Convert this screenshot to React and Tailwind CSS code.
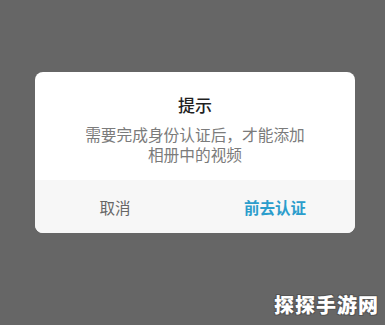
export default function App() {
  const font = { fontFamily: '"Noto Sans CJK SC", "Noto Sans", sans-serif' };
  return (
    <div
      className="relative w-[385px] h-[325px] bg-[#666666] pl-[35px] pt-[72px] overflow-hidden"
      style={font}
    >
      {/* Dialog */}
      <div className="w-[320px] h-[161px] bg-white rounded-[8px] overflow-hidden flex flex-col">
        <div className="flex-1 flex flex-col items-center pt-[21px]">
          <div className="text-[17px] leading-[24px] font-medium text-[#1f1f1f]">提示</div>
          <div className="mt-[8px] flex flex-col items-center text-[15.7px] leading-[19.5px] text-[#7b7b7b]">
            <span>需要完成身份认证后，才能添加</span>
            <span>相册中的视频</span>
          </div>
        </div>
        <div className="h-[53px] bg-[#f7f7f7] flex pt-[3px]">
          <div className="flex-1 flex items-center justify-center text-[15.5px] text-[#666666]">
            取消
          </div>
          <div className="flex-1 flex items-center justify-center text-[15.5px] font-bold text-[#2b9dcc]">
            前去认证
          </div>
        </div>
      </div>

      {/* Watermark */}
      <div className="absolute right-[6px] bottom-[9px] text-[20px] leading-[22px] font-black text-white tracking-[1px] [text-shadow:1px_1px_0_#555,-1px_-1px_0_#555,1px_-1px_0_#555,-1px_1px_0_#555]">
        探探手游网
      </div>
    </div>
  );
}
